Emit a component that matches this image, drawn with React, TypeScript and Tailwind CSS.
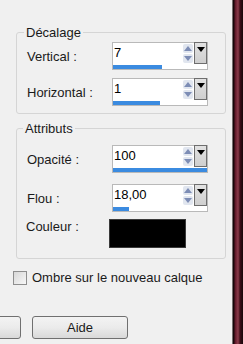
import React from "react";

interface SpinFieldProps {
  value: string;
  fill: number;
}

function SpinField({ value, fill }: SpinFieldProps) {
  return (
    <div className="flex h-[28px] w-[96px] flex-col border border-[#b9b9b9] bg-white">
      <div className="flex h-[21px] items-start">
        <div className="flex-1 pl-[1px] pt-[1px] leading-[18px] text-black">{value}</div>
        <div className="mt-[1px] flex h-[19px] w-[10px] flex-col gap-[1px]">
          <div className="flex h-[9px] items-center justify-center rounded-[2px] bg-[#e1e6ef]">
            <svg width="8" height="5" viewBox="0 0 8 5">
              <path d="M0 5 L4 0 L8 5 Z" fill="#7d8db5" />
            </svg>
          </div>
          <div className="flex h-[9px] items-center justify-center rounded-[2px] bg-[#e1e6ef]">
            <svg width="8" height="5" viewBox="0 0 8 5">
              <path d="M0 0 L4 5 L8 0 Z" fill="#7d8db5" />
            </svg>
          </div>
        </div>
        <div className="ml-[1px] flex h-[22px] w-[13px] -translate-y-[1px] justify-center border border-[#6e6e6e] bg-gradient-to-b from-[#e2e2e2] to-[#cfcfcf] pt-[4px]">
          <svg width="8" height="5" viewBox="0 0 8 5">
            <path d="M0 0 L4 5 L8 0 Z" fill="#000" />
          </svg>
        </div>
      </div>
      <div className="mt-[1px] h-[4px]">
        <div className="h-full bg-[#3b8be0]" style={{ width: `${fill}%` }} />
      </div>
    </div>
  );
}

function Row({ label, children }: { label: string; children: React.ReactNode }) {
  return (
    <div className="flex items-center">
      <div className="w-[95px] pl-[10px] leading-[15px] text-[#1a1a1a]">{label}</div>
      {children}
    </div>
  );
}

function Button({ label, className }: { label?: string; className?: string }) {
  return (
    <div
      className={
        "flex h-[23px] w-[96px] items-center justify-center rounded-[3px] border border-[#707070] bg-gradient-to-b from-[#f3f3f3] via-[#ebebeb] to-[#d9d9d9] text-[#1a1a1a] " +
        (className ?? "")
      }
    >
      {label}
    </div>
  );
}

export default function App() {
  return (
    <div
      className="flex h-[344px] w-[243px] overflow-hidden text-[13px]"
      style={{ fontFamily: '"Liberation Sans", Arial, sans-serif' }}
    >
      <div className="flex w-[232px] flex-col bg-[#f0f0f0]">
        <fieldset className="ml-[16px] mt-[25px] w-[210px] rounded-[3px] border border-[#d5d5d5] pb-[7px]">
          <legend className="ml-[7px] px-[2px] leading-[15px] text-[#1a1a1a]">Décalage</legend>
          <div className="mt-[2px] flex flex-col gap-[8px]">
            <Row label="Vertical :">
              <SpinField value="7" fill={52} />
            </Row>
            <Row label="Horizontal :">
              <SpinField value="1" fill={50} />
            </Row>
          </div>
        </fieldset>

        <fieldset className="ml-[16px] mt-[7px] w-[210px] rounded-[3px] border border-[#d5d5d5] pb-[10px]">
          <legend className="ml-[6px] px-[2px] leading-[15px] text-[#1a1a1a]">Attributs</legend>
          <div className="mt-[9px] flex flex-col">
            <Row label="Opacité :">
              <SpinField value="100" fill={100} />
            </Row>
            <div className="mt-[11px]">
              <Row label="Flou :">
                <SpinField value="18,00" fill={17} />
              </Row>
            </div>
            <div className="mt-[7px] flex items-start">
              <div className="w-[92px] pl-[9px] leading-[15px] text-[#1a1a1a]">Couleur :</div>
              <div className="h-[29px] w-[77px] border border-[#3a3a3a] bg-black" />
            </div>
          </div>
        </fieldset>

        <div className="ml-[13px] mt-[11px] flex items-center gap-[5px]">
          <div className="h-[14px] w-[14px] border border-[#8e8e8e] bg-gradient-to-br from-[#d8d8d8] to-[#f7f7f7]" />
          <span className="leading-[15px] text-[#1a1a1a]">Ombre sur le nouveau calque</span>
        </div>

        <div className="ml-[-75px] mt-[31px] flex gap-[11px]">
          <Button />
          <Button label="Aide" />
        </div>
      </div>
      <div className="w-[11px] bg-[linear-gradient(to_right,#d9d9d9_0px,#120608_1px,#1a080c_2px,#5c1626_3px,#8c3c4c_6px,#3e0e18_8px,#160709_11px)]" />
    </div>
  );
}
